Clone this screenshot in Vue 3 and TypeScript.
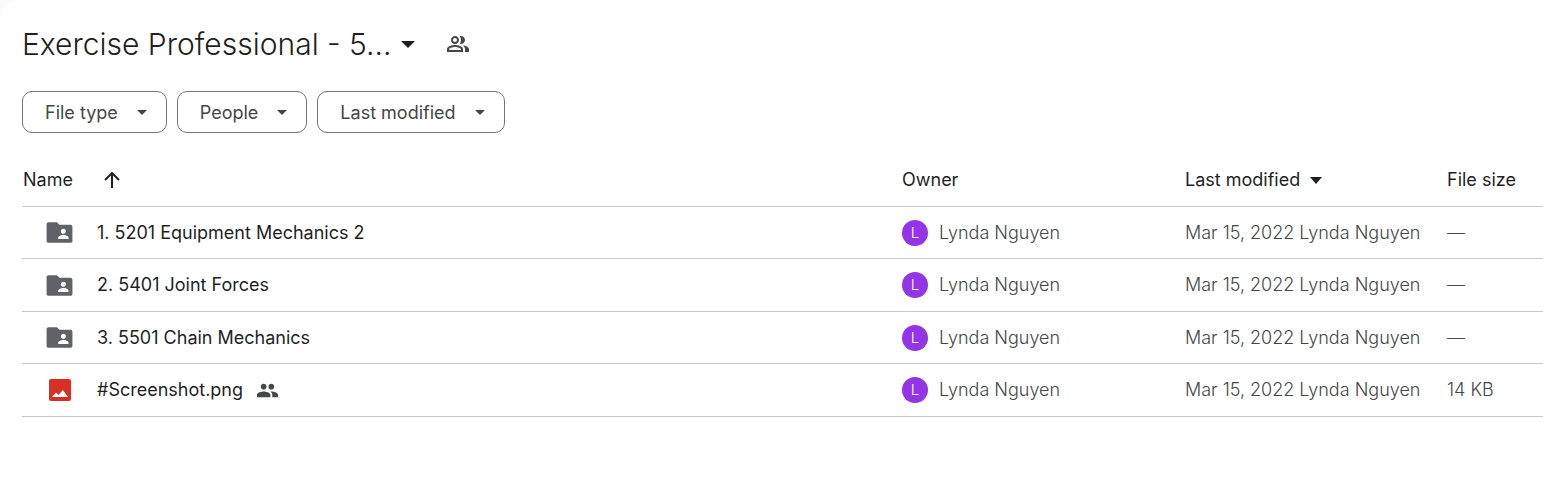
<script setup lang="ts">
interface DriveItem {
  name: string
  kind: 'folder' | 'image'
  shared: boolean
  owner: string
  modified: string
  size: string
}

const folderTitle = 'Exercise Professional - 5...'
const filters: string[] = ['File type', 'People', 'Last modified']

const owner = 'Lynda Nguyen'
const modified = 'Mar 15, 2022'
const items: DriveItem[] = [
  { name: '1. 5201 Equipment Mechanics 2', kind: 'folder', shared: false, owner, modified, size: '—' },
  { name: '2. 5401 Joint Forces', kind: 'folder', shared: false, owner, modified, size: '—' },
  { name: '3. 5501 Chain Mechanics', kind: 'folder', shared: false, owner, modified, size: '—' },
  { name: '#Screenshot.png', kind: 'image', shared: true, owner, modified, size: '14 KB' },
]
</script>

<template>
  <main class="panel">
    <header class="heading">
      <h1>
        <button type="button" class="title">
          {{ folderTitle }}
          <svg class="title-caret" viewBox="0 0 14 7" aria-hidden="true"><path d="M0 0h14L7 7z" /></svg>
        </button>
      </h1>
      <button type="button" class="share" aria-label="Manage access">
        <svg viewBox="0 0 24 24" aria-hidden="true">
          <path d="M16.67 13.13C18.04 14.06 19 15.32 19 17v3h4v-3c0-2.18-3.57-3.47-6.33-3.87zM15 12c2.21 0 4-1.79 4-4s-1.79-4-4-4c-.47 0-.91.1-1.33.24C14.5 5.27 15 6.58 15 8s-.5 2.73-1.33 3.76c.42.14.86.24 1.33.24zM9 12c2.21 0 4-1.79 4-4s-1.79-4-4-4-4 1.79-4 4 1.79 4 4 4zm0-6c1.1 0 2 .9 2 2s-.9 2-2 2-2-.9-2-2 .9-2 2-2zM9 13c-2.67 0-8 1.34-8 4v3h16v-3c0-2.66-5.33-4-8-4zm6 5H3v-.99C3.2 16.29 6.3 15 9 15s5.8 1.29 6 2v1z" />
        </svg>
      </button>
    </header>

    <div class="filters">
      <button v-for="filter in filters" :key="filter" type="button" class="chip">
        {{ filter }}
        <svg class="chip-caret" viewBox="0 0 10 5" aria-hidden="true"><path d="M0 0h10L5 5z" /></svg>
      </button>
    </div>

    <table class="files">
      <colgroup>
        <col />
        <col class="col-owner" />
        <col class="col-modified" />
        <col class="col-size" />
      </colgroup>
      <thead>
        <tr>
          <th scope="col">
            <button type="button" class="sort name-sort">
              Name
              <svg class="arrow" viewBox="0 0 16 16" aria-hidden="true"><path d="M8 16V1.500M1 8l7-7 7 7" /></svg>
            </button>
          </th>
          <th scope="col">Owner</th>
          <th scope="col">
            <button type="button" class="sort">
              Last modified
              <svg class="sort-caret" viewBox="0 0 12 7" aria-hidden="true"><path d="M0 0h12L6 7z" /></svg>
            </button>
          </th>
          <th scope="col">File size</th>
        </tr>
      </thead>
      <tbody>
        <tr v-for="item in items" :key="item.name">
          <td>
            <div class="name-cell">
              <span class="icon">
                <svg v-if="item.kind === 'folder'" class="folder" viewBox="0 0 24 24" aria-hidden="true">
                  <path d="M20.500 6H12l-2-2H3.500C2.700 4 2 4.700 2 5.500v13c0 .8.7 1.500 1.500 1.500h17c.8 0 1.500-.7 1.500-1.500v-11c0-.8-.7-1.500-1.500-1.500zM15 9c1.100 0 2 .9 2 2s-.9 2-2 2-2-.9-2-2 .9-2 2-2zm4 8h-8v-1c0-1.330 2.670-2 4-2s4 .67 4 2v1z" />
                </svg>
                <svg v-else class="picture" viewBox="0 0 22 22" aria-hidden="true">
                  <rect width="22" height="22" rx="2" fill="#d93025" />
                  <path d="M3 18l4-4.500 2.600 2.500 4.200-5L19 18z" fill="#fff" />
                </svg>
              </span>
              <span class="name">{{ item.name }}</span>
              <svg v-if="item.shared" class="people" viewBox="0 0 24 24" role="img" aria-label="Shared">
                <path d="M16 11c1.660 0 2.990-1.340 2.990-3S17.660 5 16 5s-3 1.340-3 3 1.340 3 3 3zm-8 0c1.660 0 2.990-1.340 2.990-3S9.660 5 8 5 5 6.340 5 8s1.340 3 3 3zm0 2c-2.330 0-7 1.170-7 3.500V19h14v-2.500c0-2.330-4.670-3.500-7-3.500zm8 0c-.29 0-.62.02-.97.05 1.160.84 1.970 1.970 1.970 3.450V19h6v-2.500c0-2.330-4.670-3.500-7-3.500z" />
              </svg>
            </div>
          </td>
          <td>
            <div class="owner-cell">
              <span class="avatar">{{ item.owner.charAt(0) }}</span>
              {{ item.owner }}
            </div>
          </td>
          <td>
            <div class="modified-cell">
              <span>{{ item.modified }}</span>
              <span>{{ item.owner }}</span>
            </div>
          </td>
          <td>{{ item.size }}</td>
        </tr>
      </tbody>
    </table>
  </main>
</template>

<style>
body {
  margin: 0;
  background: #f8fafd;
}
</style>

<style scoped>
.panel {
  box-sizing: border-box;
  min-height: 100vh;
  padding: 20px 0 0 22px;
  border-top-left-radius: 20px;
  background: #fff;
  color: #1f1f1f;
  font-family: Inter, "Liberation Sans", sans-serif;
  font-size: 18px;
  line-height: 24px;
}

button {
  margin: 0;
  padding: 0;
  border: 0;
  background: none;
  color: inherit;
  font: inherit;
  cursor: pointer;
}

svg {
  display: block;
  flex: none;
  fill: currentColor;
}

.heading {
  display: flex;
  align-items: center;
  gap: 31px;
  height: 48px;
}

h1 {
  margin: 0;
  font-size: 30px;
  font-weight: 300;
  line-height: 40px;
}

.title {
  display: flex;
  align-items: center;
  gap: 9px;
  white-space: nowrap;
}

.title-caret {
  width: 14px;
  height: 7px;
}

.share {
  color: #444746;
}

.share svg {
  width: 24px;
  height: 24px;
}

.filters {
  display: flex;
  gap: 10px;
  margin-top: 23px;
}

.chip {
  display: flex;
  align-items: center;
  gap: 19px;
  height: 42px;
  padding: 1px 19px 0 22px;
  border: 1px solid #747775;
  border-radius: 10px;
  color: #444746;
  white-space: nowrap;
}

.chip-caret {
  width: 10px;
  height: 5px;
}

.files {
  width: 100%;
  margin-top: 21px;
  border-collapse: separate;
  border-spacing: 0;
  table-layout: fixed;
}

.col-owner {
  width: 283px;
}

.col-modified {
  width: 262px;
}

.col-size {
  width: 96px;
}

th,
td {
  height: 51px;
  padding: 0;
  border-bottom: 1px solid #c7c7c7;
  text-align: left;
  vertical-align: middle;
  white-space: nowrap;
}

th {
  height: 52px;
  font-weight: 400;
}

tbody tr:nth-child(even) td {
  height: 52px;
}

td {
  color: #444746;
  font-weight: 300;
}

.sort {
  display: flex;
  align-items: center;
  gap: 10px;
}

.name-sort {
  gap: 31px;
  padding-left: 1px;
}

.arrow {
  width: 16px;
  height: 16px;
  fill: none;
  stroke: currentColor;
  stroke-width: 2;
}

.sort-caret {
  width: 12px;
  height: 7px;
}

.name-cell,
.owner-cell,
.modified-cell {
  display: flex;
  align-items: center;
}

.name-cell {
  color: #1f1f1f;
  font-weight: 400;
}

.icon {
  display: flex;
  justify-content: center;
  width: 75px;
}

.folder {
  width: 31px;
  height: 31px;
  color: #5f6368;
}

.picture {
  width: 22px;
  height: 22px;
}

.people {
  width: 23px;
  height: 23px;
  margin-left: 13px;
  color: #444746;
}

.owner-cell {
  gap: 11px;
}

.avatar {
  width: 26px;
  height: 26px;
  border-radius: 50%;
  background: #9334e6;
  color: #fff;
  font-size: 15px;
  line-height: 26px;
  text-align: center;
}

.modified-cell {
  gap: 5px;
}
</style>
